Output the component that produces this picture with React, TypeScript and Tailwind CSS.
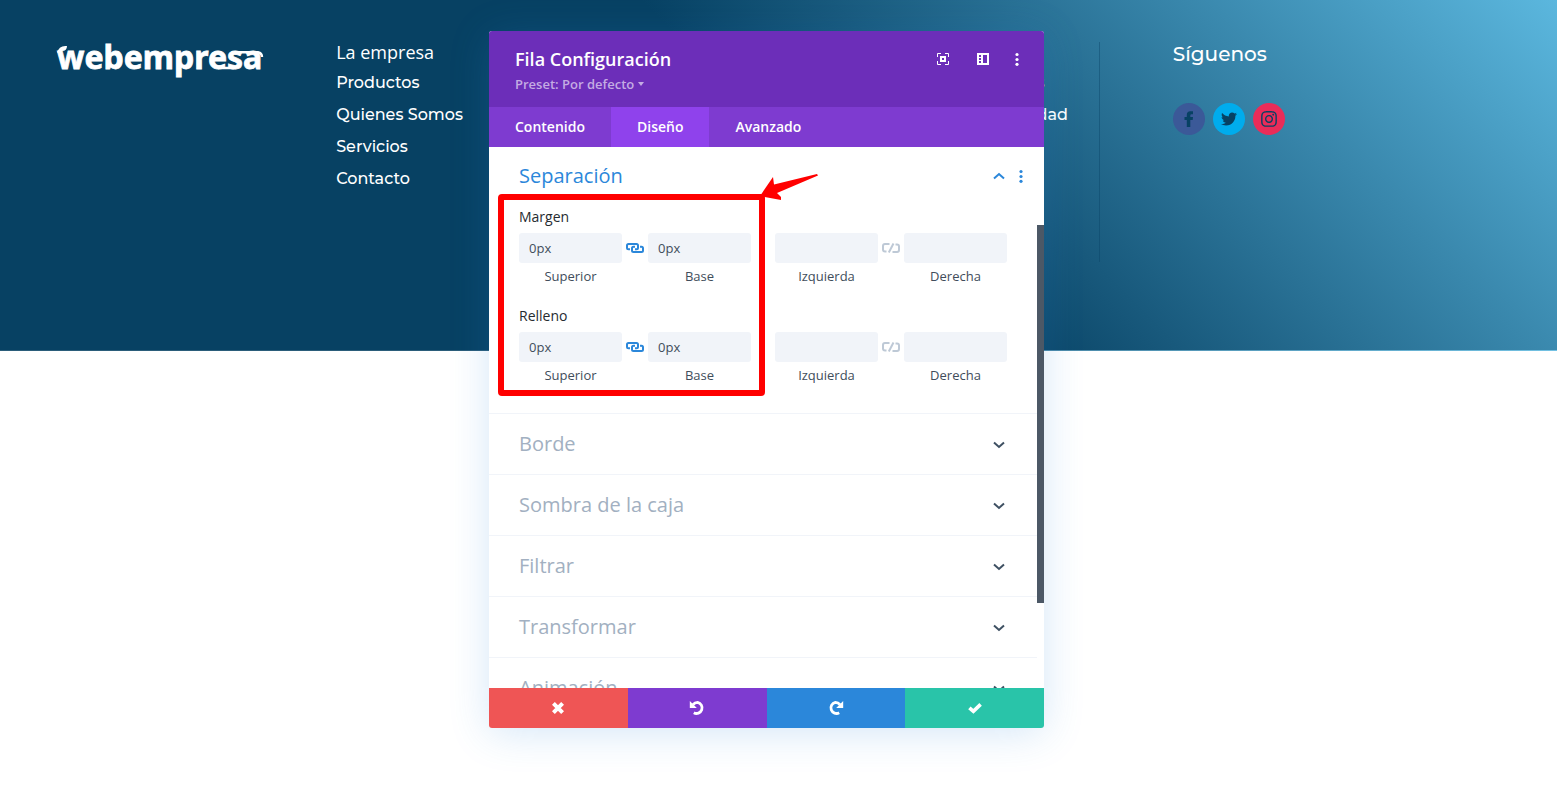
import { useState } from 'react'
import { FaTwitter, FaInstagram } from 'react-icons/fa'

const companyLinks = ['Productos', 'Quienes Somos', 'Servicios', 'Contacto']
const legalLinks = ['Política de cookies', 'Política de privacidad']
const tabs = ['Contenido', 'Diseño', 'Avanzado']
const closedSections = ['Borde', 'Sombra de la caja', 'Filtrar', 'Transformar', 'Animación']

function Logo() {
  return (
    <svg viewBox="0 0 212 36" className="w-53 h-9 block overflow-visible" role="img" aria-label="webempresa">
      <text
        x="1"
        y="27"
        fill="#fff"
        stroke="#fff"
        strokeWidth="0.8"
        className="font-['Noto_Sans','Open_Sans',sans-serif] text-[32px] font-bold"
      >
        webempresa
      </text>
      {/* Swoosh on the w and the bars that join the last letters */}
      <path d="M1 11Q3 3 11 4Q11 9 6 9Q3 9 1 11Z" fill="#fff" />
      <path d="M178 10.2H202Q206 11 206 15M162 26H178" fill="none" stroke="#fff" strokeWidth="2.4" />
    </svg>
  )
}

function LinkedIcon() {
  return (
    <svg viewBox="0 0 18 10" width="18" height="10" fill="none" stroke="#2b87da" strokeWidth="2">
      <path d="M4 6.2H2.5Q1 6.2 1 4.7V2.5Q1 1 2.5 1H10.5Q12 1 12 2.5V4.7Q12 6.2 10.5 6.2H9" />
      <path d="M14 3.8H15.5Q17 3.8 17 5.3V7.5Q17 9 15.5 9H7.5Q6 9 6 7.5V5.3Q6 3.8 7.5 3.8H9" />
    </svg>
  )
}

function UnlinkedIcon() {
  return (
    <svg viewBox="0 0 18 10" width="18" height="10" fill="none" stroke="#bec9d6" strokeWidth="2">
      <path d="M7.5 1H3Q1 1 1 3V6.5Q1 8.5 3 8.5H4.5" />
      <path d="M13.5 1.5H15Q17 1.5 17 3.5V7Q17 9 15 9H10.5" />
      <path d="M11.5 0.5L6.8 9.5" />
    </svg>
  )
}

function Chevron({ up = false }: { up?: boolean }) {
  return (
    <svg viewBox="0 0 12 10" width="12" height="10" fill="none" strokeWidth="2" stroke={up ? '#2b87da' : '#3e5062'}>
      <path d={up ? 'M1 7.5L6 3L11 7.5' : 'M1 3.5L6 8L11 3.5'} />
    </svg>
  )
}

function Dots({ color }: { color: string }) {
  return (
    <svg viewBox="0 0 4 14" width="4" height="14" fill={color}>
      <circle cx="2" cy="2.5" r="1.6" />
      <circle cx="2" cy="7.5" r="1.6" />
      <circle cx="2" cy="12.3" r="1.6" />
    </svg>
  )
}

type SideProps = { id: string; label: string; initial?: string }

function SideInput({ id, label, initial = '' }: SideProps) {
  const [value, setValue] = useState(initial)
  return (
    <div className="w-[103px]">
      <input
        id={id}
        value={value}
        onChange={e => setValue(e.target.value)}
        className="block w-full h-[30px] rounded-[3px] bg-[#f1f4f9] px-2.5 text-[13px] font-medium text-[#414d5b] outline-none"
      />
      <label htmlFor={id} className="block text-center text-[13px] leading-[26px] font-medium text-[#414d5b]">
        {label}
      </label>
    </div>
  )
}

function SpacingField({ name, title }: { name: string; title: string }) {
  return (
    <fieldset>
      <legend className="text-sm leading-6 font-medium text-[#262b30] mb-1">{title}</legend>
      <div className="flex">
        <SideInput id={`${name}-top`} label="Superior" initial="0px" />
        <button type="button" aria-label="Vincular" className="w-[26px] h-[30px] flex items-center justify-center">
          <LinkedIcon />
        </button>
        <SideInput id={`${name}-bottom`} label="Base" initial="0px" />
        <div className="w-6" />
        <SideInput id={`${name}-left`} label="Izquierda" />
        <button type="button" aria-label="Vincular" className="w-[26px] h-[30px] flex items-center justify-center">
          <UnlinkedIcon />
        </button>
        <SideInput id={`${name}-right`} label="Derecha" />
      </div>
    </fieldset>
  )
}

function PageSection() {
  return (
    <section className="h-[351px] border-b border-white/15 bg-[linear-gradient(45deg,#074163_52%,#5bb7de_100%)] text-white font-['Montserrat','Inter',sans-serif]">
      <div className="grid grid-cols-5 gap-x-[73px] pl-14 pr-[178px] pt-[42px]">
        <a href="#inicio"><Logo /></a>
        <div className="pl-px">
          <h4 className="font-['Open_Sans',sans-serif] text-lg leading-5 mb-[5px]">La empresa</h4>
          <ul>
            {companyLinks.map(l => (
              <li key={l} className="text-base leading-8 font-medium whitespace-nowrap">
                <a href="#empresa">{l}</a>
              </li>
            ))}
          </ul>
        </div>
        <div />
        <div className="h-[220px] border-r border-[#074163]/40 pt-[25px]">
          <ul>
            {legalLinks.map(l => (
              <li key={l} className="text-base leading-8 font-medium whitespace-nowrap">
                <a href="#legal">{l}</a>
              </li>
            ))}
          </ul>
        </div>
        <div>
          <h4 className="text-xl leading-6 font-medium">Síguenos</h4>
          <div className="flex gap-2 mt-[37px] text-[#074163]">
            <a href="#facebook" aria-label="Facebook" className="size-8 rounded-full bg-[#3b5998] flex items-center justify-center">
              <svg viewBox="0 0 10 16" width="10" height="16" fill="currentColor">
                <path d="M2.8 16V9H0.5V6H2.8V4Q2.8 0.3 6.3 0.3H9V3.2H7.4Q6.3 3.2 6.3 4.4V6H9L8.7 9H6.3V16Z" />
              </svg>
            </a>
            <a href="#twitter" aria-label="Twitter" className="size-8 rounded-full bg-[#00aced] flex items-center justify-center">
              <FaTwitter size={16} />
            </a>
            <a href="#instagram" aria-label="Instagram" className="size-8 rounded-full bg-[#ea2c59] flex items-center justify-center">
              <FaInstagram size={18} />
            </a>
          </div>
        </div>
      </div>
    </section>
  )
}

function SettingsModal() {
  const [active, setActive] = useState('Diseño')

  return (
    <div
      role="dialog"
      aria-label="Fila Configuración"
      className="absolute left-[489px] top-[31px] w-[555px] rounded-[3px] bg-white font-['Open_Sans',sans-serif] shadow-[0_5px_40px_rgba(43,135,218,0.2)]"
    >
      <header className="h-[76px] rounded-t-[3px] bg-[#6c2eb9] pl-[26px] pr-[25px] pt-4 flex justify-between text-white">
        <div>
          <h2 className="text-lg leading-6 font-semibold">Fila Configuración</h2>
          <button type="button" className="flex items-center gap-1 text-[13px] leading-[26px] font-semibold text-[#c4abe3]">
            Preset: Por defecto
            <svg viewBox="0 0 6 4" width="6" height="4" fill="currentColor"><path d="M0 0H6L3 4Z" /></svg>
          </button>
        </div>
        <div className="flex items-center h-6">
          <button type="button" aria-label="Ampliar">
            <svg viewBox="0 0 12 12" width="12" height="12" fill="none" stroke="#fff">
              <path d="M0.5 4V0.5H4M8 0.5H11.5V4M11.5 8V11.5H8M4 11.5H0.5V8" />
              <rect x="4" y="4" width="4" height="4" strokeWidth="2" />
            </svg>
          </button>
          <button type="button" aria-label="Acoplar" className="ml-7">
            <svg viewBox="0 0 12 12" width="12" height="12" fill="#fff" fillRule="evenodd">
              <path d="M0 0H12V12H0ZM6 2V10H10V2ZM2 2V4H4V2ZM2 5V7H4V5ZM2 8V10H4V8Z" />
            </svg>
          </button>
          <button type="button" aria-label="Más opciones" className="ml-[26px]"><Dots color="#fff" /></button>
        </div>
      </header>

      <nav className="flex h-10 bg-[#7e3bd0]">
        {tabs.map(t => (
          <button
            key={t}
            type="button"
            onClick={() => setActive(t)}
            className={`px-[26px] text-sm font-semibold text-white ${t === active ? 'bg-[#8f42ec]' : ''}`}
          >
            {t}
          </button>
        ))}
      </nav>

      <div className="flex h-[541px] overflow-hidden">
        <div className="flex-1">
          <section className="pl-[30px] pb-[25px] border-b border-[#f1f4f9]">
            <div className="flex items-center h-[58px] pr-[14px]">
              <h3 className="flex-1 text-xl text-[#2b87da]">Separación</h3>
              <button type="button" aria-label="Contraer"><Chevron up /></button>
              <button type="button" aria-label="Opciones de separación" className="ml-[14px]"><Dots color="#2b87da" /></button>
            </div>
            <div className="flex flex-col gap-[15px]">
              <SpacingField name="margen" title="Margen" />
              <SpacingField name="relleno" title="Relleno" />
            </div>
          </section>
          {closedSections.map(s => (
            <button
              key={s}
              type="button"
              className="flex w-full h-[61px] items-center justify-between border-b border-[#f1f4f9] pl-[30px] pr-8 text-xl text-[#a2b0c1]"
            >
              {s}
              <Chevron />
            </button>
          ))}
        </div>
        {/* Scrollbar */}
        <div className="w-[7px] pt-[78px]">
          <div className="h-[378px] bg-[#4c5866]" />
        </div>
      </div>

      <footer className="flex h-10 rounded-b-[3px] overflow-hidden">
        <button type="button" aria-label="Descartar" className="flex-1 flex items-center justify-center bg-[#ef5555]">
          <svg viewBox="0 0 12 12" width="12" height="12" stroke="#fff" strokeWidth="4"><path d="M1.4 1.4L10.6 10.6M10.6 1.4L1.4 10.6" /></svg>
        </button>
        <button type="button" aria-label="Deshacer" className="flex-1 flex items-center justify-center bg-[#7e3bd0]">
          <svg viewBox="0 0 16 16" width="16" height="16" fill="none" stroke="#fff" strokeWidth="2.8">
            <path d="M4 4.6Q5.8 2.4 8.6 2.4A5.6 5.6 0 1 1 4.8 12.8" />
            <path d="M0.8 1V8H7.8Z" fill="#fff" stroke="none" />
          </svg>
        </button>
        <button type="button" aria-label="Rehacer" className="flex-1 flex items-center justify-center bg-[#2b87da]">
          <svg viewBox="0 0 16 16" width="16" height="16" fill="none" stroke="#fff" strokeWidth="2.8">
            <path d="M12 4.6Q10.2 2.4 7.4 2.4A5.6 5.6 0 1 0 11.2 12.8" />
            <path d="M15.2 1V8H8.2Z" fill="#fff" stroke="none" />
          </svg>
        </button>
        <button type="button" aria-label="Guardar" className="flex-1 flex items-center justify-center bg-[#29c4a9]">
          <svg viewBox="0 0 14 11" width="14" height="11" fill="none" stroke="#fff" strokeWidth="3.6"><path d="M1.4 4.8L5.4 8.4L12.6 1.4" /></svg>
        </button>
      </footer>

      {/* Highlight over the top/bottom fields */}
      <div className="pointer-events-none absolute left-[9px] top-[163px] w-[267px] h-[202px] rounded-[4px] border-6 border-[#ff0000]" />
      <svg viewBox="0 0 58 28" width="58" height="28" className="pointer-events-none absolute left-[271px] top-[142px]" fill="#ff0000">
        <path d="M0 23L13 4L14 11.5L57 1L58 2.5L17 20L21 24V27Z" />
      </svg>
    </div>
  )
}

export default function App() {
  return (
    <main className="relative min-h-screen bg-white overflow-hidden">
      <PageSection />
      <SettingsModal />
    </main>
  )
}
